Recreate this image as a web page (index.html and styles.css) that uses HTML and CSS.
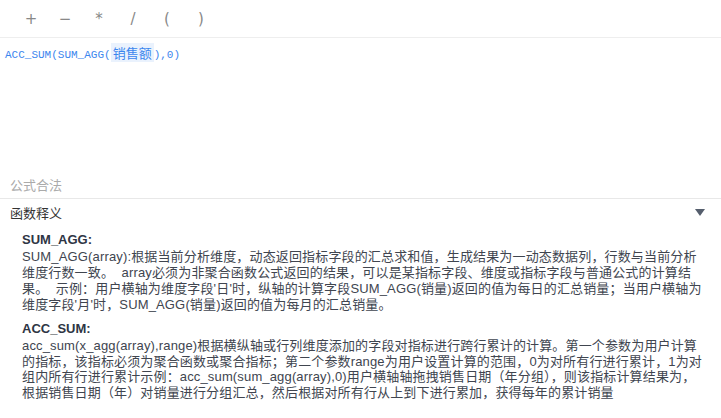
FILE: index.html
```html
<!DOCTYPE html>
<html lang="zh">
<head>
  <meta charset="UTF-8">
  <title>公式编辑</title>
  <link rel="stylesheet" href="styles.css">
</head>
<body>
  <div class="toolbar">
    <span class="op">+</span>
    <span class="op">−</span>
    <span class="op">*</span>
    <span class="op">/</span>
    <span class="op">(</span>
    <span class="op">)</span>
  </div>

  <div class="editor">
    <span class="code">ACC_SUM(SUM_AGG(<span class="field">销售额</span>),0)</span>
  </div>

  <div class="status">公式合法</div>

  <div class="help-head">
    <span>函数释义</span>
    <span class="caret"></span>
  </div>

  <div class="help">
    <div class="fn-name">SUM_AGG:</div>
    <p>SUM_AGG(array):根据当前分析维度，动态返回指标字段的汇总求和值，生成结果为一动态数据列，行数与当前分析<br>维度行数一致。 &nbsp;array必须为非聚合函数公式返回的结果，可以是某指标字段、维度或指标字段与普通公式的计算结<br>果。 &nbsp;示例：用户横轴为维度字段'日'时，纵轴的计算字段SUM_AGG(销量)返回的值为每日的汇总销量；当用户横轴为<br>维度字段'月'时，SUM_AGG(销量)返回的值为每月的汇总销量。</p>
    <div class="fn-name">ACC_SUM:</div>
    <p>acc_sum(x_agg(array),range)根据横纵轴或行列维度添加的字段对指标进行跨行累计的计算。第一个参数为用户计算<br>的指标，该指标必须为聚合函数或聚合指标；第二个参数range为用户设置计算的范围，0为对所有行进行累计，1为对<br>组内所有行进行累计示例：acc_sum(sum_agg(array),0)用户横轴轴拖拽销售日期（年分组），则该指标计算结果为，<br>根据销售日期（年）对销量进行分组汇总，然后根据对所有行从上到下进行累加，获得每年的累计销量</p>
  </div>
</body>
</html>
```

FILE: styles.css
```css
body {
  margin: 0;
  width: 721px;
  height: 418px;
  overflow: hidden;
  background: #fff;
  font-family: "Liberation Sans", "Noto Sans CJK SC", sans-serif;
  color: #333;
}

.toolbar {
  height: 37px;
  border-bottom: 1px solid #eeeeee;
  display: flex;
  align-items: center;
  padding-left: 14px;
}

.op {
  width: 34px;
  text-align: center;
  font-size: 15px;
  color: #888;
  font-family: "DejaVu Sans", sans-serif;
}

.editor {
  height: 129px;
  padding: 6px 0 0 5px;
}

.code {
  font-family: "Liberation Mono", "Noto Sans CJK SC", monospace;
  font-size: 11px;
  color: #3c86ee;
  line-height: 18px;
}

.field {
  background: #eaf2fd;
  padding: 0 2px;
  font-family: "Noto Sans CJK SC", sans-serif;
  font-size: 13px;
}

.status {
  height: 25px;
  padding-left: 10px;
  font-size: 13px;
  line-height: 25px;
  color: #aaa;
  border-bottom: 1px solid #e8e8e8;
}

.help-head {
  display: flex;
  justify-content: space-between;
  align-items: center;
  padding: 2px 16px 0 10px;
  height: 22px;
  font-size: 13px;
  color: #333;
}

.caret {
  width: 0;
  height: 0;
  border-left: 5px solid transparent;
  border-right: 5px solid transparent;
  border-top: 7px solid #555e6d;
}

.help {
  padding: 8px 0 0 22px;
  font-size: 13px;
  line-height: 15.9px;
  color: #40454f;
}

.fn-name {
  font-weight: bold;
  color: #2e3544;
  font-size: 13px;
  line-height: 18px;
}

.help p {
  margin: 0 0 7px;
  white-space: nowrap;
  letter-spacing: 0.15px;
}
```
